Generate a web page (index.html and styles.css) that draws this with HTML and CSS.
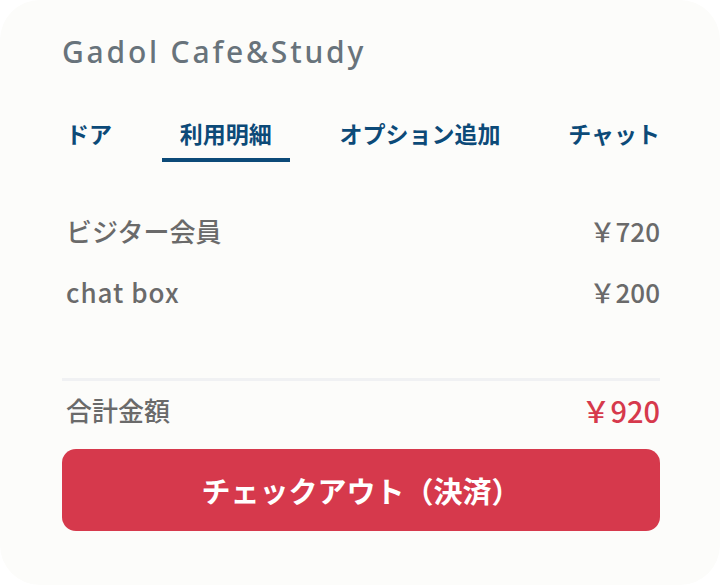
FILE: index.html
```html
<!DOCTYPE html>
<html lang="ja">
<head>
<meta charset="utf-8">
<link rel="stylesheet" href="styles.css">
</head>
<body>
<div class="card">
  <h1 class="title">Gadol Cafe&amp;Study</h1>
  <nav class="tabs">
    <div class="tab">ドア</div>
    <div class="tab active">利用明細</div>
    <div class="tab">オプション追加</div>
    <div class="tab">チャット</div>
  </nav>
  <div class="items">
    <div class="row"><span>ビジター会員</span><span>￥720</span></div>
    <div class="row"><span class="latin">chat box</span><span>￥200</span></div>
  </div>
  <div class="divider"></div>
  <div class="row total"><span>合計金額</span><span class="price">￥920</span></div>
  <button class="checkout">チェックアウト（決済）</button>
</div>
</body>
</html>
```
FILE: styles.css
```css
html, body {
  margin: 0;
  padding: 0;
  background: #ffffff;
}
body {
  font-family: "Noto Sans CJK JP", "Noto Sans", sans-serif;
}
.card {
  width: 720px;
  height: 585px;
  box-sizing: border-box;
  background: #fcfcfa;
  border-radius: 40px;
  padding: 32px 60px 0 62px;
}
.title {
  margin: 0;
  font-family: "Noto Sans", "Liberation Sans", sans-serif;
  font-size: 30px;
  line-height: 40px;
  font-weight: 500;
  color: #68737b;
  letter-spacing: 2.8px;
}
.tabs {
  display: flex;
  justify-content: space-between;
  margin: 46px -18px 0 -14px;
}
.tab {
  font-size: 23px;
  line-height: 30px;
  font-weight: 700;
  color: #0c4a78;
  padding: 0 18px 10px;
  border-bottom: 4px solid transparent;
}
.tab.active {
  border-bottom-color: #0c4a78;
}
.items {
  margin-top: 54px;
  display: flex;
  flex-direction: column;
  gap: 31px;
}
.row {
  display: flex;
  justify-content: space-between;
  font-size: 26px;
  line-height: 30px;
  font-weight: 500;
  color: #6a6a6a;
  padding-left: 4px;
}
.latin {
  letter-spacing: 1px;
}
.divider {
  margin-top: 71px;
  height: 3px;
  background: #f0f1f3;
}
.total {
  margin-top: 14px;
}
.total .price {
  color: #d6394c;
  font-size: 29px;
}
.checkout {
  display: block;
  width: 100%;
  margin-top: 24px;
  height: 82px;
  border: none;
  border-radius: 14px;
  background: #d6394c;
  color: #ffffff;
  font-family: "Noto Sans CJK JP", sans-serif;
  font-size: 29px;
  font-weight: 700;
  padding: 0;
}
```
